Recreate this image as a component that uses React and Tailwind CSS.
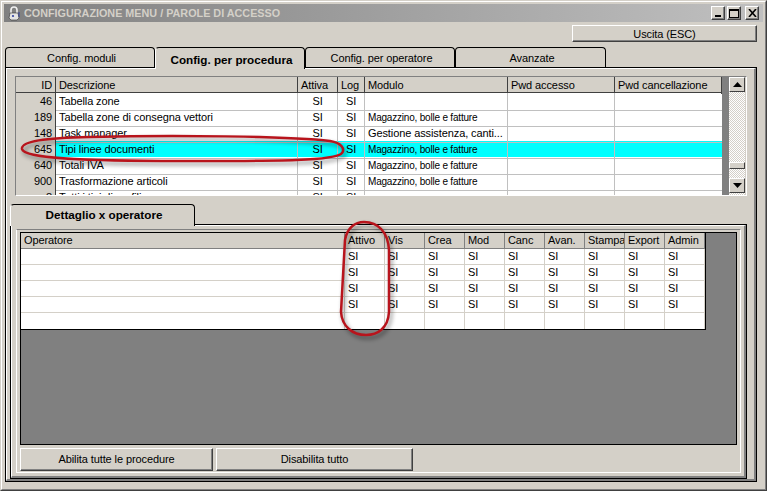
const procRows = [
  ["46", "Tabella zone", "SI", "SI", ""],
  ["189", "Tabella zone di consegna vettori", "SI", "SI", "Magazzino, bolle e fatture"],
  ["148", "Task manager", "SI", "SI", "Gestione assistenza, canti..."],
  ["645", "Tipi linee documenti", "SI", "SI", "Magazzino, bolle e fatture"],
  ["640", "Totali IVA", "SI", "SI", "Magazzino, bolle e fatture"],
  ["900", "Trasformazione articoli", "SI", "SI", "Magazzino, bolle e fatture"],
  ["8", "Tutti i tipi di profili", "SI", "SI", ""],
];

const opHeaders = ["Operatore", "Attivo", "Vis", "Crea", "Mod", "Canc", "Avan.", "Stampa", "Export", "Admin"];
const procCols = "grid grid-cols-[40px_242px_40px_27px_143px_107px_107px]";
const opCols = "grid grid-cols-[324px_40px_40px_40px_40px_40px_40px_40px_40px_40px]";

function Tab({ label, active, width, className }) {
  return (
    <div
      className={`${width} flex justify-center rounded-t-[4px] border-x border-t border-x-black border-t-black pl-[3px] ${className} ${
        active ? "relative z-10 -mb-[2px] h-[22px] border-l-white bg-[#d4d0c8] text-[11.7px] font-bold tracking-normal" : "h-[20px]"
      }`}
    >
      {label}
    </div>
  );
}

function RaisedButton({ label, className }) {
  return (
    <div
      className={`flex items-center justify-center border border-t-white border-l-white border-r-[#404040] border-b-[#404040] shadow-[inset_-1px_-1px_0_#808080] ${className}`}
    >
      {label}
    </div>
  );
}

function ScrollButton({ down }) {
  return (
    <div className="flex h-[15px] w-[16px] items-center justify-center border border-t-white border-l-white border-r-[#404040] border-b-[#404040] bg-[#d4d0c8]">
      <svg width="9" height="5" viewBox="0 0 9 5">
        <path d={down ? "M0 0H9L4.5 5Z" : "M4.5 0L9 5H0Z"} fill="#000" />
      </svg>
    </div>
  );
}

function ProcGrid() {
  return (
    <div className="h-[118px] w-[706px] overflow-hidden bg-white">
      <div className={`${procCols} h-[16px] border-b border-b-[#404040] bg-[#d4d0c8]`}>
        {["ID", "Descrizione", "Attiva", "Log", "Modulo", "Pwd accesso", "Pwd cancellazione"].map((h, i) => (
          <div key={h} className={`border-r border-r-[#404040] px-[3px] leading-[17px] ${i === 0 ? "text-right" : ""}`}>
            {h}
          </div>
        ))}
      </div>
      {procRows.map((r) => (
        <div key={r[0]} className={`${procCols} h-[16px] ${r[0] === "645" ? "bg-[#00ffff]" : ""}`}>
          <div className="border-r border-b border-r-[#404040] border-b-[#808080] bg-[#d4d0c8] px-[3px] text-right leading-[17px]">{r[0]}</div>
          <div className="border-r border-b border-[#c0c0c0] px-[3px] leading-[17px]">{r[1]}</div>
          <div className="border-r border-b border-[#c0c0c0] text-center leading-[17px]">{r[2]}</div>
          <div className="border-r border-b border-[#c0c0c0] text-center leading-[17px]">{r[3]}</div>
          <div className={`overflow-hidden border-r border-b border-[#c0c0c0] px-[3px] leading-[17px] whitespace-nowrap ${r[0] === "148" ? "" : "text-[10px] tracking-[-0.2px]"}`}>
            {r[4]}
          </div>
          <div className="border-r border-b border-[#c0c0c0]" />
          <div className="border-b border-[#c0c0c0]" />
        </div>
      ))}
    </div>
  );
}

function OpGrid() {
  return (
    <div className="h-[213px] w-[717px] border border-black bg-[#808080]">
      <div className="w-[685px] border-r border-b border-black bg-white">
        <div className={`${opCols} h-[16px] border-b border-b-[#808080] bg-[#d4d0c8]`}>
          {opHeaders.map((h) => (
            <div key={h} className="overflow-hidden border-r border-r-[#808080] pl-[3px] leading-[15px] whitespace-nowrap">
              {h}
            </div>
          ))}
        </div>
        {[0, 1, 2, 3, 4].map((row) => (
          <div key={row} className={`${opCols} h-[16px]`}>
            {opHeaders.map((h, i) => (
              <div key={h} className={`border-b border-b-[#d4d0c8] pl-[3px] leading-[15px] ${row === 4 ? "border-b-0" : ""} border-r border-r-[#d4d0c8]`}>
                {i > 0 && row < 4 ? "SI" : ""}
              </div>
            ))}
          </div>
        ))}
      </div>
    </div>
  );
}

export default function App() {
  return (
    <div className="relative h-[491px] w-[767px] overflow-hidden border-r border-b border-t border-l border-t-[#d4d0c8] border-l-[#d4d0c8] border-r-[#404040] border-b-[#404040] bg-[#d4d0c8] font-['Liberation_Sans',sans-serif] text-[11px] tracking-[-0.1px] text-black">
      <div className="h-full border-t border-l border-r border-b border-t-white border-l-white border-r-[#808080] border-b-[#808080] p-[2px]">
        {/* Title bar */}
        <div className="flex h-[18px] items-center bg-gradient-to-r from-[#808080] to-[#c0c0c0] pl-[3px] pr-[4px]">
          <svg width="14" height="15" viewBox="0 0 14 15" className="mr-[3px]">
            <path d="M4 7V4a3 3 0 0 1 6 0v3" fill="none" stroke="#f0f0f0" strokeWidth="1.6" />
            <path d="M3 7h8l1 5-2 2H4l-2-2z" fill="#e4e4e4" stroke="#333" strokeWidth="0.6" />
            <circle cx="6" cy="10" r="1.1" fill="#3040a0" />
            <path d="M12 6v5" stroke="#2030a0" strokeWidth="0.8" />
          </svg>
          <span className="text-[10.8px] font-bold tracking-normal text-[#d4d0c8]">CONFIGURAZIONE MENU / PAROLE DI ACCESSO</span>
          <div className="ml-auto flex">
            <RaisedButton
              label={
                <svg width="8" height="8" viewBox="0 0 8 8">
                  <path d="M1 6h6v2H1z" fill="#000" />
                </svg>
              }
              className="h-[14px] w-[14px] bg-[#d4d0c8]"
            />
            <RaisedButton
              label={
                <svg width="10" height="9" viewBox="0 0 10 9">
                  <path d="M0 0h10v9H0zM1 2v6h8V2z" fill="#000" fillRule="evenodd" />
                </svg>
              }
              className="ml-[2px] h-[14px] w-[14px] bg-[#d4d0c8]"
            />
            <RaisedButton
              label={
                <svg width="9" height="8" viewBox="0 0 9 8">
                  <path d="M1 0l7 8M8 0L1 8" fill="none" stroke="#000" strokeWidth="1.6" />
                </svg>
              }
              className="ml-[4px] h-[14px] w-[14px] bg-[#d4d0c8]"
            />
          </div>
        </div>

        {/* Exit */}
        <div className="mt-[3px] flex justify-end pr-[6px]">
          <RaisedButton label="Uscita (ESC)" className="h-[17px] w-[185px] pt-[1px]" />
        </div>

        {/* Main tabs */}
        <div className="mt-[5px] flex pl-[1px]">
          <Tab label="Config. moduli" width="w-[150px]" className="pt-[2px]" />
          <Tab label="Config. per procedura" active width="w-[150px]" className="pt-[3px]" />
          <Tab label="Config. per operatore" width="w-[150px]" className="pt-[2px]" />
          <Tab label="Avanzate" width="w-[151px]" className="pt-[2px]" />
        </div>
        <div className="ml-[1px] h-[415px] w-[752px] border border-black">
          <div className="h-full border-t border-l border-r-2 border-b-2 border-t-white border-l-white border-r-[#808080] border-b-[#808080] pt-[7px] pl-[3px]">
            {/* Procedure grid */}
            <div className="ml-[5px] flex h-[120px] w-[732px] border-t border-l border-r border-b border-t-[#808080] border-l-[#808080] border-r-white border-b-white">
              <ProcGrid />
              <div className="flex w-[23px] bg-[#808080] pl-[7px]">
                <div className="flex h-[118px] w-[16px] flex-col bg-[repeating-conic-gradient(#ffffff_0_25%,#d4d0c8_0_50%)] bg-[length:2px_2px]">
                  <ScrollButton />
                  <div className="mt-[70px] h-[7px] border border-t-white border-l-white border-r-[#404040] border-b-[#404040] bg-[#d4d0c8]" />
                  <div className="mt-[9px]">
                    <ScrollButton down />
                  </div>
                </div>
              </div>
            </div>

            {/* Detail tab */}
            <div className="mt-[8px] flex">
              <Tab label="Dettaglio x operatore" active width="w-[185px]" className="pt-[1px]" />
            </div>
            <div className="h-[255px] w-[737px] border border-black">
              <div className="h-full border-t border-l border-r-2 border-b-2 border-t-white border-l-white border-r-[#808080] border-b-[#808080] pt-[3px] pl-[4px]">
                <div className="h-[244px] w-[725px] border border-t-[#808080] border-r-white border-b-white border-l-white pt-[2px] pl-[3px]">
                  <OpGrid />
                  <div className="mt-[3px] flex gap-[3px]">
                    <RaisedButton label="Abilita tutte le procedure" className="h-[23px] w-[193px]" />
                    <RaisedButton label="Disabilita tutto" className="h-[23px] w-[197px]" />
                  </div>
                </div>
              </div>
            </div>
          </div>
        </div>
      </div>

      {/* Red marker annotations drawn over the screenshot */}
      <svg width="767" height="491" className="pointer-events-none absolute -top-px -left-px z-20 drop-shadow-[2px_3px_2px_rgba(0,0,0,0.45)]">
        <path d="M22 149C21 141 45 138 90 137C170 135 290 136 330 141C342 143 345 149 342 153C336 161 280 161 180 161C90 161 24 159 22 149Z" fill="none" stroke="#b8141c" strokeWidth="2.5" />
        <path d="M345 240C347 228 355 222 364 222C378 222 388 232 389 250L389 312C388 328 378 335 366 335C352 335 342 326 341 312Z" fill="none" stroke="#b8141c" strokeWidth="2.5" />
      </svg>
    </div>
  );
}
